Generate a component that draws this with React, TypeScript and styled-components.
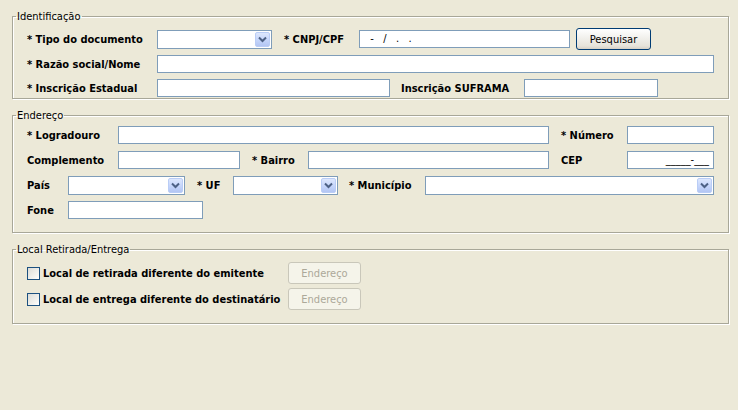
import React, { FC } from "react"
import styled, { createGlobalStyle } from "styled-components"

const GlobalStyle = createGlobalStyle`
  html, body {
    margin: 0;
    padding: 0;
    background: #ece9d8;
  }
  body {
    font-family: "DejaVu Sans Condensed", "DejaVu Sans", sans-serif;
    font-size: 11px;
    color: #000;
  }
`

const Page = styled.div`
  width: 738px;
  height: 410px;
  box-sizing: border-box;
  padding: 10px 9px 0 12px;
  display: flex;
  flex-direction: column;
  gap: 10px;
`

const Group = styled.fieldset<{ $pt: number; $pb: number; $gap: number }>`
  margin: 0;
  border: 1px solid #a8a798;
  box-shadow: 1px 1px 0 #fff, inset 1px 1px 0 #fff;
  padding: ${(p) => p.$pt}px 14px ${(p) => p.$pb}px 14px;
  display: flex;
  flex-direction: column;
  gap: ${(p) => p.$gap}px;
  min-width: 0;
`

const Legend = styled.legend`
  margin-left: -11px;
  padding: 0 1px;
  font-family: "DejaVu Sans Condensed", "DejaVu Sans", sans-serif;
  font-size: 11px;
  line-height: 13px;
  font-weight: normal;
`

const Row = styled.div<{ $h?: number }>`
  display: flex;
  align-items: center;
  height: ${(p) => p.$h || 20}px;
`

const Label = styled.span<{ $w: number; $ml?: number }>`
  width: ${(p) => p.$w}px;
  margin-left: ${(p) => p.$ml || 0}px;
  flex: none;
  font-weight: bold;
  white-space: nowrap;
`

const TextBox = styled.div<{ $w?: number; $ml?: number; $right?: boolean }>`
  box-sizing: border-box;
  height: 18px;
  width: ${(p) => (p.$w ? `${p.$w}px` : "auto")};
  flex: ${(p) => (p.$w ? "none" : "1")};
  margin-left: ${(p) => p.$ml || 0}px;
  border: 1px solid #7f9db9;
  background: #fff;
  padding: 0 4px;
  display: flex;
  align-items: center;
  justify-content: ${(p) => (p.$right ? "flex-end" : "flex-start")};
  line-height: 16px;
  white-space: pre;
`

const Combo = styled.div<{ $w: number }>`
  box-sizing: border-box;
  height: 19px;
  width: ${(p) => p.$w}px;
  flex: none;
  border: 1px solid #7f9db9;
  background: #fff;
  display: flex;
  justify-content: flex-end;
  padding: 1px;
`

const ComboArrow = styled.div`
  box-sizing: border-box;
  width: 15px;
  height: 15px;
  border: 1px solid #bacdf6;
  border-radius: 2px;
  background: linear-gradient(180deg, #dde7fd 0%, #c5d5fb 55%, #b3c6f3 100%);
  display: flex;
  align-items: center;
  justify-content: center;
`

const Button = styled.div<{ $w: number; $ml?: number; $disabled?: boolean }>`
  box-sizing: border-box;
  width: ${(p) => p.$w}px;
  height: 22px;
  flex: none;
  margin-left: ${(p) => p.$ml || 0}px;
  border: 1px solid ${(p) => (p.$disabled ? "#c9c7ba" : "#003c74")};
  border-radius: 3px;
  background: ${(p) =>
    p.$disabled
      ? "#f5f4ea"
      : "linear-gradient(180deg, #ffffff 0%, #f3f2ee 40%, #e6e3da 85%, #d6d0c5 100%)"};
  color: ${(p) => (p.$disabled ? "#aca899" : "#000")};
  display: flex;
  align-items: center;
  justify-content: center;
`

const CheckRow = styled.div`
  display: flex;
  align-items: center;
  width: 261px;
  flex: none;
  gap: 3px;
  font-weight: bold;
  white-space: nowrap;
`

const CheckBox = styled.span`
  box-sizing: border-box;
  width: 13px;
  height: 13px;
  flex: none;
  border: 1px solid #1c5180;
  background: linear-gradient(135deg, #dcdcd7 0%, #f4f4f0 70%, #ffffff 100%);
`

const Chevron: FC = () => (
  <svg width="9" height="7" viewBox="0 0 9 7">
    <path d="M1 1.5 L4.5 5 L8 1.5" fill="none" stroke="#4d6185" strokeWidth="2" />
  </svg>
)

const Select: FC<{ w: number }> = ({ w }) => (
  <Combo $w={w}>
    <ComboArrow>
      <Chevron />
    </ComboArrow>
  </Combo>
)

const App: FC = () => {
  return (
    <Page>
      <GlobalStyle />
      <Group $pt={5} $pb={0} $gap={4}>
        <Legend>Identificação</Legend>
        <Row $h={22}>
          <Label $w={130}>* Tipo do documento</Label>
          <Select w={115} />
          <Label $w={75} $ml={12}>* CNPJ/CPF</Label>
          <TextBox $w={211}>{"  -   /   .   ."}</TextBox>
          <Button $w={75} $ml={6}>Pesquisar</Button>
        </Row>
        <Row>
          <Label $w={130}>* Razão social/Nome</Label>
          <TextBox />
        </Row>
        <Row>
          <Label $w={130}>* Inscrição Estadual</Label>
          <TextBox $w={233} />
          <Label $w={123} $ml={11}>Inscrição SUFRAMA</Label>
          <TextBox $w={134} />
        </Row>
      </Group>

      <Group $pt={3} $pb={12} $gap={5}>
        <Legend>Endereço</Legend>
        <Row>
          <Label $w={91}>* Logradouro</Label>
          <TextBox $w={431} />
          <Label $w={66} $ml={12}>* Número</Label>
          <TextBox />
        </Row>
        <Row>
          <Label $w={91}>Complemento</Label>
          <TextBox $w={122} />
          <Label $w={56} $ml={12}>* Bairro</Label>
          <TextBox $w={241} />
          <Label $w={66} $ml={12}>CEP</Label>
          <TextBox $right>_____-___</TextBox>
        </Row>
        <Row>
          <Label $w={41}>País</Label>
          <Select w={117} />
          <Label $w={36} $ml={12}>* UF</Label>
          <Select w={105} />
          <Label $w={76} $ml={11}>* Município</Label>
          <Select w={289} />
        </Row>
        <Row>
          <Label $w={41}>Fone</Label>
          <TextBox $w={135} />
        </Row>
      </Group>

      <Group $pt={6} $pb={13} $gap={4}>
        <Legend>Local Retirada/Entrega</Legend>
        <Row $h={22}>
          <CheckRow>
            <CheckBox />
            Local de retirada diferente do emitente
          </CheckRow>
          <Button $w={73} $disabled>Endereço</Button>
        </Row>
        <Row $h={22}>
          <CheckRow>
            <CheckBox />
            Local de entrega diferente do destinatário
          </CheckRow>
          <Button $w={73} $disabled>Endereço</Button>
        </Row>
      </Group>
    </Page>
  )
}

export default App
